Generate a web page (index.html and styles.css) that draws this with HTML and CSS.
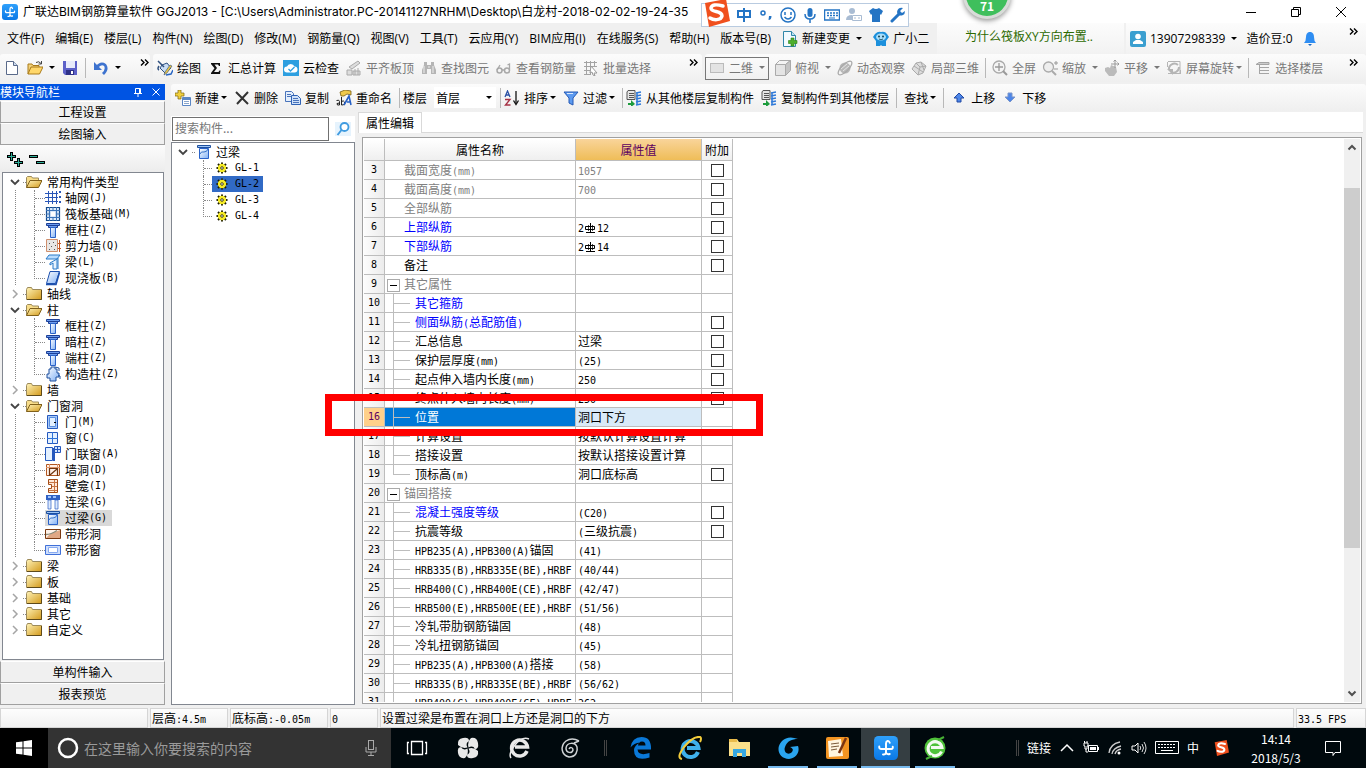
FILE: index.html
```html
<!DOCTYPE html>
<html lang="zh-CN">
<head>
<meta charset="utf-8">
<title>广联达BIM钢筋算量软件 GGJ2013</title>
<link rel="stylesheet" href="styles.css">
</head>
<body>
<svg class="defs" aria-hidden="true">
<defs>
<linearGradient id="gBlue" x1="0" y1="0" x2="1" y2="1"><stop offset="0" stop-color="#fff"/><stop offset="1" stop-color="#7fb0f5"/></linearGradient>
<linearGradient id="gFold" x1="0" y1="0" x2="1" y2="1"><stop offset="0" stop-color="#fff3b8"/><stop offset="1" stop-color="#d39a1c"/></linearGradient>
<linearGradient id="gApp" x1="0" y1="0" x2="0" y2="1"><stop offset="0" stop-color="#2ea0fb"/><stop offset="1" stop-color="#0a78e6"/></linearGradient>
<symbol id="i-app" viewBox="0 0 16 16"><rect width="16" height="16" rx="3" fill="url(#gApp)"/><path d="M10.500 4.500Q10 3 9 3.300 8 3.600 8 5V10.500Q8 12.500 6 12.300M3.500 7Q3.300 8.700 5 8.700H11.500Q12.700 8.700 12.500 7.200M8 11Q8.500 12.500 10.500 12" fill="none" stroke="#fff" stroke-width="1.300" stroke-linecap="round"/></symbol>
<symbol id="i-doc" viewBox="0 0 16 16"><path d="M2.500 1.500h7l4 4v9h-11z" fill="#fff" stroke="#5a6a8a"/><path d="M9.500 1.500v4h4" fill="#cddcf0" stroke="#5a6a8a"/></symbol>
<symbol id="i-open" viewBox="0 0 16 16"><path d="M1 14V4h4l1 1.500h6V8" fill="#f3d27a" stroke="#a97a1a"/><path d="M1 14l3-7h12l-3.500 7z" fill="#ffd76a" stroke="#a97a1a"/><path d="M9 2.500q3-2 5 1M14.500 1v3h-3" fill="none" stroke="#444"/></symbol>
<symbol id="i-save" viewBox="0 0 16 16"><path d="M1 1h14v14H3l-2-2z" fill="#5c60c8"/><path d="M4 1h9v7H4z" fill="#e8ebfa"/><path d="M4 10h8v5H4z" fill="#2d3087"/><path d="M9 11h2v3H9z" fill="#fff"/></symbol>
<symbol id="i-undo" viewBox="0 0 16 16"><path d="M4 7q4-5 8-2 3 4-2 9" fill="none" stroke="#3e73cf" stroke-width="2.800"/><path d="M1 2v8h8z" fill="#3e73cf"/></symbol>
<symbol id="i-draw" viewBox="0 0 16 16"><path d="M5 5l5-2 4 5-6 5-5-5z" fill="#c9ddf5" stroke="#31517f"/><path d="M1 1l6 6M2 6q-2 3 0 4" fill="none" stroke="#31517f" stroke-width="1.500"/><path d="M15 6l-5 7-3 2 1-3 5-7z" fill="#e9c443" stroke="#31517f" stroke-width=".6"/><path d="M9 15l5-1 2-4" fill="none" stroke="#2a67c4" stroke-width="1.500"/></symbol>
<symbol id="i-sum" viewBox="0 0 16 16"><path d="M3 3h9v3h-1l-1-1.500H6.500L9 8l-3 4H10.500l1-1.500h1L12 14H3v-1l3.500-4.800L3 4z" fill="#111"/></symbol>
<symbol id="i-cloud" viewBox="0 0 16 16"><rect width="16" height="16" fill="#2d9fe0"/><path d="M4 12.500a3 3 0 010-6 4 4 0 017.500 0 3 3 0 010 6z" fill="#fff"/><path d="M5.500 9l2 2 4-4" fill="none" stroke="#2d9fe0" stroke-width="1.300"/></symbol>
<symbol id="i-level" viewBox="0 0 16 16"><path d="M3 7l9-6 2 2-8 6zM1 10h5v5H1zM7 11h7v4H7z" fill="#ddd" stroke="#aaa"/><path d="M9 9v6M12 8v7" stroke="#aaa"/></symbol>
<symbol id="i-binoc" viewBox="0 0 16 16"><path d="M3 2h3v3h4V2h3v3l2 5v4h-5V9H6v5H1v-4l2-5z" fill="#b5b5b5"/><path d="M3 6v7M12 6v7M8 6v2" stroke="#eee"/></symbol>
<symbol id="i-glasses" viewBox="0 0 16 16"><circle cx="3.500" cy="10.500" r="2.500" fill="none" stroke="#a8a8a8" stroke-width="1.500"/><circle cx="11" cy="10.500" r="2.500" fill="none" stroke="#a8a8a8" stroke-width="1.500"/><path d="M6 10h2.500M1 10l3-5M13.500 10V4l-2 1" fill="none" stroke="#a8a8a8" stroke-width="1.300"/></symbol>
<symbol id="i-batch" viewBox="0 0 16 16"><path d="M1 2.500h13M1 6.500h13M1 10.500h7M1 14.500h6M3.500 1v14M7.500 1v14M11.500 1v5" stroke="#a3a3a3"/><path d="M8 6l6 7h-3l1 3-2-1-1-3-2 1z" fill="#fff" stroke="#999"/></symbol>
<symbol id="i-rect" viewBox="0 0 16 16"><rect x="1.500" y="3.500" width="13" height="9" fill="#e3e3e3" stroke="#bbb"/></symbol>
<symbol id="i-cube" viewBox="0 0 16 16"><path d="M.5 4.500h10v11H.5z" fill="#e4e4e4" stroke="#aaa"/><path d="M.5 4.500l4-4h11l-5 4z" fill="#f4f4f4" stroke="#aaa"/><path d="M10.500 4.500l5-4v10l-5 5z" fill="#c4c4c4" stroke="#aaa"/></symbol>
<symbol id="i-orbit" viewBox="0 0 16 16"><circle cx="8" cy="8" r="5.500" fill="#b9b9b9"/><ellipse cx="8" cy="8" rx="9" ry="3.500" transform="rotate(-45 8 8)" fill="none" stroke="#aaa" stroke-width="1.300"/><path d="M4 9l6-5M6 11l6-5" stroke="#e4e4e4"/></symbol>
<symbol id="i-part" viewBox="0 0 16 16"><path d="M1 9l4-6 5-1 5 4-3 7-5 2z" fill="#ddd" stroke="#aaa"/><path d="M5 3l4 4-2 8M10 2l3 8M3 6l9 6M9 7l6-1" fill="none" stroke="#aaa"/></symbol>
<symbol id="i-full" viewBox="0 0 16 16"><circle cx="7" cy="7" r="6" fill="#f4f4f4" stroke="#aaa" stroke-width="1.300"/><path d="M7 3v8M3 7h8" stroke="#999" stroke-width="1.300"/><path d="M11 11l4 4" stroke="#999" stroke-width="2"/></symbol>
<symbol id="i-zoom" viewBox="0 0 16 16"><circle cx="6.500" cy="7" r="5" fill="#eee" stroke="#aaa" stroke-width="1.300"/><path d="M10 11l4 4" stroke="#aaa" stroke-width="2"/><path d="M12 3h4M14 1v4M12 9h4" stroke="#999"/></symbol>
<symbol id="i-pan" viewBox="0 0 16 16"><path d="M1 8l3-1 2 1 1-3 5 2 1 5-3 4H5L1 11z" fill="#bbb"/><path d="M11 0v8M7 4h8M9.500 1.500l1.500-1.500 1.500 1.500M13.500 2.500l1.500 1.500-1.500 1.500" fill="none" stroke="#999"/></symbol>
<symbol id="i-rot" viewBox="0 0 16 16"><path d="M2 1.500h12v12H2M1.500 2v5M14.500 10v4" fill="none" stroke="#b5b5b5"/><path d="M3 10a5.500 5.500 0 019-5M13 7a5.500 5.500 0 01-8 5" fill="none" stroke="#b5b5b5" stroke-width="2"/><path d="M1 9h6v6z" fill="#b5b5b5"/></symbol>
<symbol id="i-floor" viewBox="0 0 16 16"><path d="M1 4.500l3-2h10v2zM4 7.500h10M4 10.500h10M4 13.500h10M4.500 5v9" fill="#ccc" stroke="#a5a5a5"/></symbol>
<symbol id="i-new" viewBox="0 0 16 16"><path d="M3 0h3v3h3v3H6v3H3V6H0V3h3z" fill="#f0cf3e" stroke="#7c6510" stroke-width=".7"/><path d="M7.500 7.500h8v8h-8z" fill="#fff" stroke="#5a86c5"/><path d="M8 8h7v2H8z" fill="#5a86c5"/><path d="M9 11.500h5M9 13.500h5" stroke="#8aa6cc"/></symbol>
<symbol id="i-del" viewBox="0 0 16 16"><path d="M2 2l12 12M14 2L3 14" stroke="#333" stroke-width="2"/></symbol>
<symbol id="i-copy" viewBox="0 0 16 16"><path d="M.5 1.500h6l2 2v8h-8z" fill="#e3eefc" stroke="#4a74bb"/><path d="M6.500 5.500h6l3 3v6h-9z" fill="#cfe1f9" stroke="#2f62b5"/><path d="M2 4.500h4M2 6.500h4M8 8.500h5M8 10.500h6M8 12.500h6" stroke="#4a74bb"/></symbol>
<symbol id="i-rename" viewBox="0 0 16 16"><path d="M4 2l5-2 6 1v4l-4-1-3 2H5z" fill="#efc94c" stroke="#795d12" stroke-width=".8"/><path d="M.5 10.500q3-1 3 1v3.500H1.500q-2-2 2-2M5.500 7v8q4 0 3-3-1-2-3-.5" fill="none" stroke="#222"/><path d="M8 15l5-9 2 9M11 12h4" fill="none" stroke="#2761c6" stroke-width="1.600"/></symbol>
<symbol id="i-sort" viewBox="0 0 16 16"><path d="M1 7l2.500-6L6 7M2 5h3" fill="none" stroke="#2b51a5" stroke-width="1.300"/><path d="M1 9.500h5L1.500 15H6.500" fill="none" stroke="#a63245" stroke-width="1.400"/><path d="M12 1v13" stroke="#111" stroke-width="1.300"/><path d="M9.500 10.500l2.500 4 2.500-4" fill="none" stroke="#111" stroke-width="1.300"/></symbol>
<symbol id="i-filter" viewBox="0 0 16 16"><path d="M1 2h14L10 8v7l-4-2V8z" fill="#5c9af0" stroke="#2458b4"/><path d="M4 3.500h6" stroke="#d9e9ff"/></symbol>
<symbol id="i-from" viewBox="0 0 16 16"><path d="M2 .5h7v9H1V2z" fill="#e6e6e6" stroke="#555"/><path d="M3 3.500h5M3 5.500h5M3 7.500h5" stroke="#555"/><path d="M10 3l5-1M10 6l5-1M10 9l5-1M10 12l5-1M10 15l5-1M11 3v12" stroke="#2f79d8" stroke-width="1.500"/><path d="M2 13h3v-3l4 4-4 3v-2H2z" fill="#1c9b3c"/></symbol>
<symbol id="i-up" viewBox="0 0 16 16"><path d="M8 3l5 5h-3v4H6V8H3z" fill="#4d86e8" stroke="#2149a3"/></symbol>
<symbol id="i-down" viewBox="0 0 16 16"><path d="M8 12L3 7h3V3h4v4h3z" fill="#4d86e8" stroke="#7a95c9"/></symbol>
<symbol id="i-change" viewBox="0 0 16 16"><path d="M1.500.5h8l4 4v11h-12z" fill="#f2fafe" stroke="#2f86a8"/><path d="M9.500.5v4h4" fill="#bfe4f2" stroke="#2f86a8"/><path d="M9 7h3v2.500h3v3h-3V15H9v-2.500H6.500v-3H9z" fill="#4cae2c" stroke="#2c7f14" stroke-width=".6"/></symbol>
<symbol id="i-bot" viewBox="0 0 16 16"><path d="M2 3q3-3 6-2 4-1 6 2l2 3-3 4v5H9l-1-1-1 1H3v-5L0 6z" fill="#1c90dc"/><ellipse cx="8" cy="6" rx="5" ry="3.500" fill="#a9defa"/><circle cx="6" cy="5.500" r="1" fill="#145"/><circle cx="10" cy="5.500" r="1" fill="#145"/><path d="M6 8q2 1.500 4 0" fill="none" stroke="#145" stroke-width=".8"/></symbol>
<symbol id="i-user" viewBox="0 0 16 16"><rect width="16" height="16" rx="2" fill="#3b9fd0"/><circle cx="8" cy="5.500" r="2.800" fill="#fff"/><path d="M3 13v-2l3-2h4l3 2v2z" fill="#fff"/></symbol>
<symbol id="i-bell" viewBox="0 0 16 16"><path d="M2 12q2-2 2-6 0-4 3-5h2q3 1 3 5 0 4 2 6z" fill="#2e8df2"/><path d="M6 13h4l-2 2z" fill="#1968c4"/></symbol>
<symbol id="i-folder" viewBox="0 0 16 16"><path d="M.5 3.500l1-2h4l1 2h9v10H.5z" fill="url(#gFold)" stroke="#9c8a5a"/><path d="M15.500 4v9.500H1" fill="none" stroke="#5e4a1a"/></symbol>
<symbol id="i-folderopen" viewBox="0 0 16 16"><path d="M.5 13.500v-10l1-1h4l1 1.500h6V7" fill="#f8dd8a" stroke="#9c8a5a"/><path d="M.5 13.500L4 6.500h12l-3.500 7z" fill="url(#gFold)" stroke="#80601a"/></symbol>
<symbol id="t-grid" viewBox="0 0 16 16"><path d="M0 3.500h13M0 7.500h13M0 11.500h13M3.500 1v13M7.500 1v13M11.500 1v13" stroke="#2a57b8"/><path d="M14 1h2v2h-2zM14 6h2v2h-2zM14 11h2v2h-2z" fill="#2a57b8"/></symbol>
<symbol id="t-raft" viewBox="0 0 16 16"><path d="M1.500 1.500h13v13h-13zM4.500 4.500h7v7h-7z" fill="#dcebfc" stroke="#154a8c" stroke-width="1.200"/><path d="M1 4.500h14M1 11.500h14M4.500 1v14M11.500 1v14M8 1v3M8 12v3M1 8h3M12 8h3" stroke="#3b74b8"/><path d="M6 6h4v4H6z" fill="#fff"/></symbol>
<symbol id="t-col" viewBox="0 0 16 16"><path d="M1.500 1.500h13v2h-13zM3.500 3.500h9v2h-9z" fill="#6b9cef" stroke="#1c3f96"/><path d="M5.500 5.500h5v10h-5z" fill="url(#gBlue)" stroke="#2a62c8"/></symbol>
<symbol id="t-wall" viewBox="0 0 16 16"><path d="M1.500 1.500h11v12h-11z" fill="#e8e6e4" stroke="#cf8f6c"/><path d="M4 5.500h1M8 4.500h1M6 8.500h1M10 7.500h1M4 11.500h1M9 11.500h1" stroke="#555"/><path d="M14.500 2v12M13 5.500h3M13 10.500h3" stroke="#c65a28"/></symbol>
<symbol id="t-beam" viewBox="0 0 16 16"><path d="M1 5l3-4h11l-3 4z" fill="#b8dcff" stroke="#2a7ac8"/><path d="M5 9l7-4v10H8V9l-3 2zM13 4v11" fill="#e6f3ff" stroke="#2a7ac8"/></symbol>
<symbol id="t-slab" viewBox="0 0 16 16"><path d="M5 1.500h9.500l-4 12H1.500z" fill="url(#gBlue)" stroke="#1d50ae"/><path d="M1 14.500h10l3.500-12" fill="none" stroke="#1d50ae" stroke-width="1.500"/></symbol>
<symbol id="t-gzz" viewBox="0 0 16 16"><path d="M4 3h2V1h4v2h2v4h2v4h-3v4H5v-3H2V8h2z" fill="url(#gBlue)" stroke="#1d4f9c"/><path d="M10 1l4 1v3M13 9l2 1v3" fill="none" stroke="#1d4f9c"/></symbol>
<symbol id="t-door" viewBox="0 0 16 16"><path d="M2.500 1.500h10v13h-10z" fill="#a8caf8" stroke="#2558bd"/><path d="M4.500 3.500h6v9h-6z" fill="#e3f0ff" stroke="#5a8ee0"/><path d="M9 8.500h2" stroke="#000"/></symbol>
<symbol id="t-win" viewBox="0 0 16 16"><path d="M2.500 2.500h10v11h-10z" fill="#e3f0ff" stroke="#2558bd"/><path d="M7.500 2v12M2 8.500h11" stroke="#2d72d8"/></symbol>
<symbol id="t-dwin" viewBox="0 0 16 16"><path d="M.5 1.500h7v13h-7z" fill="#e3f0ff" stroke="#2558bd"/><path d="M9.500.5h6v6h-6zM12.500 1v6M9 3.500h6" fill="#cfe2fb" stroke="#2558bd"/><path d="M9 2v13" stroke="#2558bd" stroke-width="2"/></symbol>
<symbol id="t-hole" viewBox="0 0 16 16"><path d="M1.500 2.500h13v11h-13z" fill="#fff1e8" stroke="#b2561f"/><path d="M1 5.500h14M4.500 2v12M12.500 2v3" stroke="#e0956a"/><path d="M4.500 14V6.500h8V14M5 13l7-6" fill="none" stroke="#6e3510" stroke-width="1.200"/></symbol>
<symbol id="t-niche" viewBox="0 0 16 16"><path d="M3.500 1.500h9v13h-9v-4h3v-4h-3z" fill="#ffe9d8" stroke="#a54c16"/><path d="M9.500 2v12M4 4.500h8M7 8.500h5M4 12.500h8" stroke="#c77444"/></symbol>
<symbol id="t-ll" viewBox="0 0 16 16"><path d="M1 1h14v5H1z" fill="#2f60c4"/><path d="M3 2h3v2H3zM8 2h3v2H8z" fill="#9ec3fa"/><path d="M3 6h3v9H3zM10 6h3v9h-3z" fill="#dceafe" stroke="#2f60c4" stroke-width=".7"/></symbol>
<symbol id="t-gl" viewBox="0 0 16 16"><path d="M1.500 1.500h13v2h-13z" fill="#9cc4f8" stroke="#1d4f9c"/><path d="M3.500 4.500h9v10h-9z" fill="url(#gBlue)" stroke="#2a62c8"/><path d="M4 10q1-3 4-2 3 0 4-3" fill="none" stroke="#3472c9"/></symbol>
<symbol id="t-sh" viewBox="0 0 16 16"><path d="M.5 3.500h15v9H.5z" fill="#fff3ea" stroke="#7a3a12"/><path d="M1 12l4-4 10-4v8z" fill="#e0a885"/><path d="M1 8.500q5 0 11-4" fill="none" stroke="#8b8b7a" stroke-width="1.500"/></symbol>
<symbol id="t-sw" viewBox="0 0 16 16"><path d="M.5 3.500h15v9H.5z" fill="#cfdffc" stroke="#4070d8"/><path d="M3.500 5.500h9v5h-9z" fill="#fff" stroke="#88aaf0"/></symbol>
<symbol id="t-gear" viewBox="0 0 16 16"><path d="M8 2.500v11M2.500 8h11M4 4l8 8M12 4l-8 8" stroke="#1c1c00" stroke-width="2"/><circle cx="8" cy="8" r="4.200" fill="#f5ea24"/><circle cx="8" cy="8" r="1.300" fill="#fff" stroke="#1c1c00" stroke-width=".8"/></symbol>
<symbol id="i-caret" viewBox="0 0 6 4"><path d="M0 0h6L3 3z" fill="currentColor"/></symbol>
<symbol id="i-more" viewBox="0 0 9 7"><path d="M1 0.500l3 3-3 3M5 0.500l3 3-3 3" fill="none" stroke="#000" stroke-width="1.400"/></symbol>
<symbol id="c-open" viewBox="0 0 10 10"><path d="M1 3l4 4 4-4" fill="none" stroke="#444" stroke-width="1.800"/></symbol>
<symbol id="c-shut" viewBox="0 0 10 10"><path d="M3 1l4 4-4 4" fill="none" stroke="#a5a5a5" stroke-width="1.500"/></symbol>
<symbol id="i-rebar" viewBox="0 0 10 10"><path d="M5.500 0v10M1 9.500h9M.5 3.500h9v3h-9z" fill="none" stroke="#000"/><path d="M3.500 2v6M7.500 2v6" stroke="#000" stroke-width=".7"/></symbol>
<symbol id="i-sogou" viewBox="0 0 28 28"><path d="M3 4L24 0l4 22-21 6z" fill="#f0501e"/><path d="M21 7q-11-3-12 2c0 5 11 2 11 8-1 5-9 4-12 2" fill="none" stroke="#fff" stroke-width="3.500" stroke-linecap="round"/></symbol>
</defs>
</svg>

<header class="titlebar">
  <svg class="ico"><use href="#i-app"/></svg>
  <h1>广联达BIM钢筋算量软件 GGJ2013 - [C:\Users\Administrator.PC-20141127NRHM\Desktop\白龙村-2018-02-02-19-24-35</h1>
  <div class="winbtns">
    <button aria-label="最小化"><svg viewBox="0 0 12 12"><path d="M1 6.500h10" stroke="#000"/></svg></button>
    <button aria-label="还原"><svg viewBox="0 0 12 12"><path d="M1.500 3.500h7v7h-7zM3.500 3.500v-2h7v7h-2" fill="none" stroke="#000"/></svg></button>
    <button aria-label="关闭"><svg viewBox="0 0 12 12"><path d="M1 1l10 10M11 1L1 11" stroke="#000"/></svg></button>
  </div>
</header>

<div class="menubar">
  <nav class="menus">
    <button>文件(F)</button><button>编辑(E)</button><button>楼层(L)</button><button>构件(N)</button><button>绘图(D)</button><button>修改(M)</button><button>钢筋量(Q)</button><button>视图(V)</button><button>工具(T)</button><button>云应用(Y)</button><button>BIM应用(I)</button><button>在线服务(S)</button><button>帮助(H)</button><button>版本号(B)</button>
    <button><svg class="ico"><use href="#i-change"/></svg>新建变更<svg class="caret wide"><use href="#i-caret"/></svg></button>
    <button><svg class="ico"><use href="#i-bot"/></svg>广小二</button>
  </nav>
  <a class="tip" href="#">为什么筏板XY方向布置..</a>
  <div class="account">
    <button><svg class="ico"><use href="#i-user"/></svg>13907298339<svg class="caret wide"><use href="#i-caret"/></svg></button>
    <span>造价豆:0</span>
    <button aria-label="消息"><svg class="ico"><use href="#i-bell"/></svg></button>
    <button class="more" aria-label="更多"><svg><use href="#i-more"/></svg></button>
  </div>
</div>

<div class="toolrow">
  <div class="bar files">
    <button aria-label="新建工程"><svg class="ico"><use href="#i-doc"/></svg></button>
    <button aria-label="打开"><svg class="ico"><use href="#i-open"/></svg><svg class="caret"><use href="#i-caret"/></svg></button>
    <button aria-label="保存"><svg class="ico"><use href="#i-save"/></svg></button>
    <span class="sep"></span>
    <button aria-label="撤销"><svg class="ico"><use href="#i-undo"/></svg><svg class="caret wide"><use href="#i-caret"/></svg></button>
    <button class="more" aria-label="更多"><svg><use href="#i-more"/></svg></button>
  </div>
  <div class="bar edit">
    <button><svg class="ico"><use href="#i-draw"/></svg>绘图</button>
    <button><svg class="ico"><use href="#i-sum"/></svg>汇总计算</button>
    <button><svg class="ico"><use href="#i-cloud"/></svg>云检查</button>
    <button class="off"><svg class="ico"><use href="#i-level"/></svg>平齐板顶</button>
    <button class="off"><svg class="ico"><use href="#i-binoc"/></svg>查找图元</button>
    <button class="off"><svg class="ico"><use href="#i-glasses"/></svg>查看钢筋量</button>
    <button class="off"><svg class="ico"><use href="#i-batch"/></svg>批量选择</button>
    <button class="more" aria-label="更多"><svg><use href="#i-more"/></svg></button>
  </div>
  <div class="bar view">
    <button class="off dim"><svg class="ico"><use href="#i-rect"/></svg>二维<svg class="caret wide"><use href="#i-caret"/></svg></button>
    <button class="off"><svg class="ico"><use href="#i-cube"/></svg>俯视<svg class="caret wide"><use href="#i-caret"/></svg></button>
    <button class="off"><svg class="ico"><use href="#i-orbit"/></svg>动态观察</button>
    <button class="off"><svg class="ico"><use href="#i-part"/></svg>局部三维</button>
    <span class="sep"></span>
    <button class="off"><svg class="ico"><use href="#i-full"/></svg>全屏</button>
    <button class="off"><svg class="ico"><use href="#i-zoom"/></svg>缩放<svg class="caret wide"><use href="#i-caret"/></svg></button>
    <button class="off"><svg class="ico"><use href="#i-pan"/></svg>平移<svg class="caret wide"><use href="#i-caret"/></svg></button>
    <button class="off"><svg class="ico"><use href="#i-rot"/></svg>屏幕旋转<svg class="caret"><use href="#i-caret"/></svg></button>
    <span class="sep"></span>
    <button class="off"><svg class="ico"><use href="#i-floor"/></svg>选择楼层</button>
    <button class="more" aria-label="更多"><svg><use href="#i-more"/></svg></button>
  </div>
</div>

<main class="work">
  <aside class="nav">
    <div class="navhead"><h2>模块导航栏</h2>
      <button aria-label="固定"><svg viewBox="0 0 10 10"><path d="M2.500 6V1.500h5V6M1 6.500h8M5 6.500V10M6.500 1.500V6" fill="none" stroke="#fff"/></svg></button>
      <button aria-label="关闭导航栏"><svg viewBox="0 0 10 10"><path d="M1.500 1.500l7 7M8.500 1.500l-7 7" stroke="#fff"/></svg></button>
    </div>
    <button class="section">工程设置</button>
    <button class="section">绘图输入</button>
    <div class="navtools">
      <button aria-label="全部展开"><svg viewBox="0 0 17 16"><path d="M5.500 1v9M1 5.500h9M12.500 7v9M8 11.500h9" stroke="#000" stroke-width="3"/><path d="M5.500 2v7M2 5.500h7M12.500 8v7M9 11.500h7" stroke="#2fae98"/></svg></button>
      <button aria-label="全部折叠"><svg viewBox="0 0 17 16"><path d="M1 5.500h9M8 11.500h9" stroke="#000" stroke-width="3"/><path d="M2 5.500h7M9 11.500h7" stroke="#2fae98"/></svg></button>
    </div>
    <ul class="tree">
      <li><div class="row"><svg class="chev"><use href="#c-open"/></svg><svg class="ico"><use href="#i-folderopen"/></svg>常用构件类型</div>
        <ul>
          <li><a href="#"><svg class="ico"><use href="#t-grid"/></svg>轴网<span class="m">(J)</span></a></li>
          <li><a href="#"><svg class="ico"><use href="#t-raft"/></svg>筏板基础<span class="m">(M)</span></a></li>
          <li><a href="#"><svg class="ico"><use href="#t-col"/></svg>框柱<span class="m">(Z)</span></a></li>
          <li><a href="#"><svg class="ico"><use href="#t-wall"/></svg>剪力墙<span class="m">(Q)</span></a></li>
          <li><a href="#"><svg class="ico"><use href="#t-beam"/></svg>梁<span class="m">(L)</span></a></li>
          <li><a href="#"><svg class="ico"><use href="#t-slab"/></svg>现浇板<span class="m">(B)</span></a></li>
        </ul></li>
      <li><div class="row"><svg class="chev"><use href="#c-shut"/></svg><svg class="ico"><use href="#i-folder"/></svg>轴线</div></li>
      <li><div class="row"><svg class="chev"><use href="#c-open"/></svg><svg class="ico"><use href="#i-folderopen"/></svg>柱</div>
        <ul>
          <li><a href="#"><svg class="ico"><use href="#t-col"/></svg>框柱<span class="m">(Z)</span></a></li>
          <li><a href="#"><svg class="ico"><use href="#t-col"/></svg>暗柱<span class="m">(Z)</span></a></li>
          <li><a href="#"><svg class="ico"><use href="#t-col"/></svg>端柱<span class="m">(Z)</span></a></li>
          <li><a href="#"><svg class="ico"><use href="#t-gzz"/></svg>构造柱<span class="m">(Z)</span></a></li>
        </ul></li>
      <li><div class="row"><svg class="chev"><use href="#c-shut"/></svg><svg class="ico"><use href="#i-folder"/></svg>墙</div></li>
      <li><div class="row"><svg class="chev"><use href="#c-open"/></svg><svg class="ico"><use href="#i-folderopen"/></svg>门窗洞</div>
        <ul>
          <li><a href="#"><svg class="ico"><use href="#t-door"/></svg>门<span class="m">(M)</span></a></li>
          <li><a href="#"><svg class="ico"><use href="#t-win"/></svg>窗<span class="m">(C)</span></a></li>
          <li><a href="#"><svg class="ico"><use href="#t-dwin"/></svg>门联窗<span class="m">(A)</span></a></li>
          <li><a href="#"><svg class="ico"><use href="#t-hole"/></svg>墙洞<span class="m">(D)</span></a></li>
          <li><a href="#"><svg class="ico"><use href="#t-niche"/></svg>壁龛<span class="m">(I)</span></a></li>
          <li><a href="#"><svg class="ico"><use href="#t-ll"/></svg>连梁<span class="m">(G)</span></a></li>
          <li><a href="#" class="cur"><svg class="ico"><use href="#t-gl"/></svg>过梁<span class="m">(G)</span></a></li>
          <li><a href="#"><svg class="ico"><use href="#t-sh"/></svg>带形洞</a></li>
          <li><a href="#"><svg class="ico"><use href="#t-sw"/></svg>带形窗</a></li>
        </ul></li>
      <li><div class="row"><svg class="chev"><use href="#c-shut"/></svg><svg class="ico"><use href="#i-folder"/></svg>梁</div></li>
      <li><div class="row"><svg class="chev"><use href="#c-shut"/></svg><svg class="ico"><use href="#i-folder"/></svg>板</div></li>
      <li><div class="row"><svg class="chev"><use href="#c-shut"/></svg><svg class="ico"><use href="#i-folder"/></svg>基础</div></li>
      <li><div class="row"><svg class="chev"><use href="#c-shut"/></svg><svg class="ico"><use href="#i-folder"/></svg>其它</div></li>
      <li><div class="row"><svg class="chev"><use href="#c-shut"/></svg><svg class="ico"><use href="#i-folder"/></svg>自定义</div></li>
    </ul>
    <button class="section">单构件输入</button>
    <button class="section">报表预览</button>
  </aside>

  <section class="content">
    <div class="bar manage">
      <button><svg class="ico"><use href="#i-new"/></svg>新建<svg class="caret"><use href="#i-caret"/></svg></button>
      <button><svg class="ico"><use href="#i-del"/></svg>删除</button>
      <button><svg class="ico"><use href="#i-copy"/></svg>复制</button>
      <button><svg class="ico"><use href="#i-rename"/></svg>重命名</button>
      <span class="sep tight"></span>
      <label for="floor">楼层</label>
      <span class="pick"><select id="floor"><option>首层</option></select><svg class="caret"><use href="#i-caret"/></svg></span>
      <span class="sep tight"></span>
      <button><svg class="ico"><use href="#i-sort"/></svg>排序<svg class="caret"><use href="#i-caret"/></svg></button>
      <button><svg class="ico"><use href="#i-filter"/></svg>过滤<svg class="caret"><use href="#i-caret"/></svg></button>
      <span class="sep tight"></span>
      <button><svg class="ico"><use href="#i-from"/></svg>从其他楼层复制构件</button>
      <button><svg class="ico"><use href="#i-from"/></svg>复制构件到其他楼层</button>
      <span class="sep"></span>
      <button>查找<svg class="caret"><use href="#i-caret"/></svg></button>
      <span class="sep"></span>
      <button><svg class="ico"><use href="#i-up"/></svg>上移</button>
      <button><svg class="ico"><use href="#i-down"/></svg>下移</button>
    </div>
    <div class="panes">
      <div class="parts">
        <div class="find"><input type="text" aria-label="搜索构件" placeholder="搜索构件...">
          <button aria-label="搜索"><svg class="ico" viewBox="0 0 16 16"><path d="M0 1h16v14H0z" fill="#e6f3fd"/><circle cx="9.500" cy="6" r="4" fill="#fff" stroke="#3f9be0" stroke-width="1.800"/><path d="M6.500 9l-4 5" stroke="#3f9be0" stroke-width="2"/></svg></button></div>
        <ul class="tree list">
          <li><div class="row"><svg class="chev"><use href="#c-open"/></svg><svg class="ico"><use href="#t-gl"/></svg>过梁</div>
            <ul>
              <li><a href="#"><svg class="ico"><use href="#t-gear"/></svg><span class="m">GL-1</span></a></li>
              <li><a href="#" class="sel"><svg class="ico"><use href="#t-gear"/></svg><span class="m">GL-2</span></a></li>
              <li><a href="#"><svg class="ico"><use href="#t-gear"/></svg><span class="m">GL-3</span></a></li>
              <li><a href="#"><svg class="ico"><use href="#t-gear"/></svg><span class="m">GL-4</span></a></li>
            </ul></li>
        </ul>
      </div>
      <div class="props">
        <div class="tabs"><button class="tab">属性编辑</button></div>
        <div class="frame">
          <div class="sheet">
          <table>
            <colgroup><col class="c1"><col class="c2"><col class="c3"><col class="c4"></colgroup>
            <thead><tr><th></th><th>属性名称</th><th class="hot">属性值</th><th>附加</th></tr></thead>
            <tbody>
              <tr class="gray"><th>3</th><td class="top">截面宽度<span class="m">(mm)</span></td><td><span class="m">1057</span></td><td><input type="checkbox" aria-label="附加 3"></td></tr>
              <tr class="gray"><th>4</th><td class="top">截面高度<span class="m">(mm)</span></td><td><span class="m">700</span></td><td><input type="checkbox" aria-label="附加 4"></td></tr>
              <tr class="gray"><th>5</th><td class="top">全部纵筋</td><td></td><td><input type="checkbox" aria-label="附加 5"></td></tr>
              <tr><th>6</th><td class="top blue">上部纵筋</td><td><span class="m">2</span><svg class="rebar"><use href="#i-rebar"/></svg><span class="m">12</span></td><td><input type="checkbox" aria-label="附加 6"></td></tr>
              <tr><th>7</th><td class="top blue">下部纵筋</td><td><span class="m">2</span><svg class="rebar"><use href="#i-rebar"/></svg><span class="m">14</span></td><td><input type="checkbox" aria-label="附加 7"></td></tr>
              <tr><th>8</th><td class="top">备注</td><td></td><td><input type="checkbox" aria-label="附加 8"></td></tr>
              <tr class="gray"><th>9</th><td class="group"><button aria-label="折叠其它属性"></button>其它属性</td><td></td><td></td></tr>
              <tr><th>10</th><td class="sub blue">其它箍筋</td><td></td><td></td></tr>
              <tr><th>11</th><td class="sub blue">侧面纵筋<span class="m">(</span>总配筋值<span class="m">)</span></td><td></td><td><input type="checkbox" aria-label="附加 11"></td></tr>
              <tr><th>12</th><td class="sub">汇总信息</td><td>过梁</td><td><input type="checkbox" aria-label="附加 12"></td></tr>
              <tr><th>13</th><td class="sub">保护层厚度<span class="m">(mm)</span></td><td><span class="m">(25)</span></td><td><input type="checkbox" aria-label="附加 13"></td></tr>
              <tr><th>14</th><td class="sub">起点伸入墙内长度<span class="m">(mm)</span></td><td><span class="m">250</span></td><td><input type="checkbox" aria-label="附加 14"></td></tr>
              <tr><th>15</th><td class="sub">终点伸入墙内长度<span class="m">(mm)</span></td><td><span class="m">250</span></td><td><input type="checkbox" aria-label="附加 15"></td></tr>
              <tr class="active"><th>16</th><td class="sub">位置</td><td>洞口下方</td><td></td></tr>
              <tr><th>17</th><td class="sub">计算设置</td><td>按默认计算设置计算</td><td></td></tr>
              <tr><th>18</th><td class="sub">搭接设置</td><td>按默认搭接设置计算</td><td></td></tr>
              <tr><th>19</th><td class="sub end">顶标高<span class="m">(m)</span></td><td>洞口底标高</td><td><input type="checkbox" aria-label="附加 19"></td></tr>
              <tr class="gray"><th>20</th><td class="group"><button aria-label="折叠锚固搭接"></button>锚固搭接</td><td></td><td></td></tr>
              <tr><th>21</th><td class="sub blue">混凝土强度等级</td><td><span class="m">(C20)</span></td><td><input type="checkbox" aria-label="附加 21"></td></tr>
              <tr><th>22</th><td class="sub">抗震等级</td><td><span class="m">(</span>三级抗震<span class="m">)</span></td><td><input type="checkbox" aria-label="附加 22"></td></tr>
              <tr><th>23</th><td class="sub"><span class="m">HPB235(A),HPB300(A)</span>锚固</td><td><span class="m">(41)</span></td><td></td></tr>
              <tr><th>24</th><td class="sub"><span class="m">HRB335(B),HRB335E(BE),HRBF</span></td><td><span class="m">(40/44)</span></td><td></td></tr>
              <tr><th>25</th><td class="sub"><span class="m">HRB400(C),HRB400E(CE),HRBF</span></td><td><span class="m">(42/47)</span></td><td></td></tr>
              <tr><th>26</th><td class="sub"><span class="m">HRB500(E),HRB500E(EE),HRBF</span></td><td><span class="m">(51/56)</span></td><td></td></tr>
              <tr><th>27</th><td class="sub">冷轧带肋钢筋锚固</td><td><span class="m">(48)</span></td><td></td></tr>
              <tr><th>28</th><td class="sub">冷轧扭钢筋锚固</td><td><span class="m">(45)</span></td><td></td></tr>
              <tr><th>29</th><td class="sub"><span class="m">HPB235(A),HPB300(A)</span>搭接</td><td><span class="m">(58)</span></td><td></td></tr>
              <tr><th>30</th><td class="sub"><span class="m">HRB335(B),HRB335E(BE),HRBF</span></td><td><span class="m">(56/62)</span></td><td></td></tr>
              <tr><th>31</th><td class="sub"><span class="m">HRB400(C),HRB400E(CE),HRBF</span></td><td><span class="m">262</span></td><td></td></tr>
            </tbody>
          </table>
          </div>
          <div class="scroll">
            <svg viewBox="0 0 10 10"><path d="M1.500 6.500L5 3l3.500 3.500" fill="none" stroke="#505050" stroke-width="2"/></svg>
            <span class="track"><span class="thumb"></span></span>
            <svg viewBox="0 0 10 10"><path d="M1.500 3.500L5 7l3.500-3.500" fill="none" stroke="#505050" stroke-width="2"/></svg>
          </div>
        </div>
      </div>
    </div>
  </section>
</main>

<footer class="status">
  <span class="s1"></span><span class="s2">层高<span class="m">:4.5m</span></span><span class="s3">底标高<span class="m">:-0.05m</span></span><span class="s4"><span class="m">0</span></span><span class="s5">设置过梁是布置在洞口上方还是洞口的下方</span><span class="s6"><span class="m">33.5 FPS</span></span>
</footer>

<div class="taskbar">
  <button class="start" aria-label="开始"><svg viewBox="0 0 16 16"><path d="M0 2.300L6.500 1.400V7.500H0zM7.500 1.200L16 0v7.500H7.500zM0 8.500h6.500v6.100L0 13.700zM7.500 8.500H16V16l-8.500-1.200z" fill="#fff"/></svg></button>
  <div class="search"><svg class="ring" viewBox="0 0 22 22"><circle cx="11" cy="11" r="9" fill="none" stroke="#fff" stroke-width="2.500"/></svg>
    <input type="text" aria-label="搜索" placeholder="在这里输入你要搜索的内容">
    <svg class="ico" viewBox="0 0 16 16"><rect x="5.500" y=".5" width="5" height="9" fill="none" stroke="#aaa"/><path d="M3 7v5h10V7M8 12v3M5 15.500h6" fill="none" stroke="#aaa"/></svg></div>
  <div class="apps first">
    <button aria-label="任务视图"><svg viewBox="0 0 24 24"><path d="M6.500 5.500h11v13h-11zM4 6.500H2.500v11H4M20 6.500h1.500v11H20" fill="none" stroke="#fff" stroke-width="1.300"/></svg></button>
    <button aria-label="应用"><svg viewBox="0 0 24 24"><path d="M11.500 11.500Q6 13 2 9q-1-6 5-7 6-1 6 3-4 2-1.500 6.500zM12.500 11.500Q11 6 15 2q6-1 7 5 1 6-3 6-2-4-6.500-1.500zM12.500 12.500Q18 11 22 15q1 6-5 7-6 1-6-3 4-2 1.500-6.500zM11.500 12.500Q13 18 9 22q-6 1-7-5-1-6 3-6 2 4 6.500 1.500z" fill="#e9e9e9"/></svg></button>
    <button aria-label="浏览器"><svg viewBox="0 0 24 24"><path d="M20 15a8 8 0 11.500-4H8" fill="none" stroke="#e9e9e9" stroke-width="3.500"/><path d="M4 22Q1 18 8 9t14-6" fill="none" stroke="#e9e9e9" stroke-width="1.500"/></svg></button>
    <button aria-label="漩涡"><svg viewBox="0 0 24 24"><path d="M21 5q-7-4-13 0c-6 5-5 14 3 16 7 0 9-6 8-10-2-5-10-5-11 1 0 5 6 6 7 2 0-3-3-3-4-1M21 5l-5 2" fill="none" stroke="#cfd3d5" stroke-width="1.500"/></svg></button>
  </div>
  <span class="grip"></span>
  <div class="apps">
    <button aria-label="Edge"><svg viewBox="0 0 24 24"><path d="M22 13.500H8.500q1 7 12 3.500v4.500Q5 26 5 14q.5-5 6-7.500Q5 7 1.500 11.500 3 1 12.500 1 22.500 1 22 13.500zM9 9.500h7.500q0-4-3.500-4-3.500 0-4 4z" fill="#0a78d7"/></svg></button>
    <button aria-label="Internet Explorer"><svg viewBox="0 0 24 24"><path d="M20 16a8 8 0 11.500-4H9" fill="none" stroke="#3fb1ec" stroke-width="4"/><path d="M4 23Q-2 22 6 11 15 0 22 1q2 1 0 5" fill="none" stroke="#f3cd3b" stroke-width="2"/></svg></button>
    <button aria-label="文件资源管理器"><svg viewBox="0 0 24 24"><path d="M2 3h8l2 3h11v14H2z" fill="#fbe08a"/><path d="M2 3h8v3H2z" fill="#e9bb4a"/><path d="M6 21v-8h13v8h-4v-4h-5v4z" fill="#36a7e0"/></svg></button>
    <button class="run" aria-label="广联达"><svg viewBox="0 0 24 24"><path d="M22 3Q12-1 6 5C-1 12 3 23 13 23c8-1 11-8 9-13l-8 1c2 1 4 2 2 5-4 4-9 0-7-5 2-6 7-8 13-8z" fill="#2aa5ef"/></svg></button>
    <button class="run" aria-label="文档"><svg viewBox="0 0 24 24"><rect x="1" y="1" width="23" height="22" rx="2" fill="#f29422"/><path d="M3 5l13-2 2 17-14 1z" fill="#fff6e0"/><path d="M6 8l8-1M6 11l8-1M6 14l6-1" stroke="#7a5a3a"/><path d="M21 2l-7 15" stroke="#7a3412" stroke-width="2.500"/></svg></button>
    <button class="run on" aria-label="GGJ2013"><svg viewBox="0 0 16 16"><use href="#i-app"/></svg></button>
    <button class="run" aria-label="360浏览器"><svg viewBox="0 0 24 24"><circle cx="12" cy="12" r="10.500" fill="#4fc23a"/><path d="M18.500 15.500a7 7 0 11.500-4H8" fill="none" stroke="#f4fbf0" stroke-width="3"/><path d="M21 1l-6 3M3 23l6-3" stroke="#46b034" stroke-width="2"/></svg></button>
  </div>
  <div class="tray">
    <span class="grip"></span>
    <span class="link">链接</span>
    <svg viewBox="0 0 16 16"><path d="M2 11l6-6 6 6" fill="none" stroke="#fff" stroke-width="1.500"/></svg>
    <svg viewBox="0 0 16 16"><path d="M5.500 5.500h9v6h-9z" fill="none" stroke="#fff"/><path d="M7 7h6v3H7zM15 7h1v3h-1z" fill="#fff"/><path d="M1 3h4v3H4v3H2V6H1zM1.500 1v2M4 1v2M3 9v3h2" fill="none" stroke="#fff"/></svg>
    <svg viewBox="0 0 16 16"><path d="M2 13Q3 4 13 2M5 14q1-6 9-8M8 14q1-4 6-5" fill="none" stroke="#ccc" stroke-width="1.300"/><circle cx="12" cy="13" r="1.500" fill="#fff"/></svg>
    <svg viewBox="0 0 16 16"><path d="M1 6h3l3-3v10l-3-3H1z" fill="none" stroke="#fff"/><path d="M9 6q1.500 2 0 4M11 4q3 4 0 8M13 2q4 6 0 12" fill="none" stroke="#ddd"/></svg>
    <svg class="kbd" viewBox="0 0 24 16"><path d="M.5 1.500h23v12H.5z" fill="none" stroke="#fff"/><path d="M3 4.500h18M3 7.500h18" stroke="#fff" stroke-dasharray="2 1"/><path d="M6 10.500h12" stroke="#fff"/></svg>
    <span class="ime">中</span>
    <svg viewBox="0 0 28 28"><use href="#i-sogou"/></svg>
    <time>14:14<br>2018/5/3</time>
    <svg class="note" viewBox="0 0 16 16"><path d="M.5 1.500h15v11H10l-2 3v-3H.5z" fill="none" stroke="#fff"/></svg>
  </div>
</div>

<div class="mark"></div>
<div class="ball">71</div>
<div class="imebar">
  <svg class="logo"><use href="#i-sogou"/></svg>
  <svg viewBox="0 0 16 16"><path d="M2 4h12v6H2zM8 1v14" fill="none" stroke="#2474c4" stroke-width="2"/></svg>
  <svg viewBox="0 0 16 16"><circle cx="5" cy="6" r="2" fill="none" stroke="#2474c4" stroke-width="1.500"/><path d="M11 9h2.500q0 4-3 4" fill="#2474c4"/></svg>
  <svg viewBox="0 0 16 16"><circle cx="8" cy="8" r="7" fill="none" stroke="#2474c4" stroke-width="1.500"/><path d="M5 5v3M11 5v3M4.500 10q3.500 4 7 0" fill="none" stroke="#2474c4" stroke-width="1.500"/></svg>
  <svg viewBox="0 0 16 16"><rect x="5.500" y="1" width="5" height="9" rx="2.500" fill="#2474c4"/><path d="M3 7q0 5 5 5t5-5M8 12v4" fill="none" stroke="#2474c4" stroke-width="1.500"/></svg>
  <svg viewBox="0 0 16 16"><path d="M.5 3h15v10H.5z" fill="none" stroke="#2474c4" stroke-width="1.500"/><path d="M3 6h11M3 8.500h11" stroke="#2474c4" stroke-width="1.500" stroke-dasharray="2 1"/><path d="M5 11h6" stroke="#2474c4"/></svg>
  <svg viewBox="0 0 16 16"><circle cx="6" cy="4" r="3" fill="#a9bcd3"/><path d="M0 13q0-5 6-5l1 5z" fill="#a9bcd3"/><path d="M6.500 8.500h9v5h-9z" fill="#fff" stroke="#a9bcd3"/><path d="M8 11h2M12 11h2" stroke="#a9bcd3"/></svg>
  <svg viewBox="0 0 16 16"><path d="M1 4l4-3q3 2 6 0l4 3-2 4-1-1v8H4V7L3 8z" fill="#2474c4"/></svg>
  <svg viewBox="0 0 16 16"><path d="M2 14l7-7" stroke="#2474c4" stroke-width="3" stroke-linecap="round"/><path d="M13 1q-5-1-6 4 1 5 6 3 2-1 2-4l-3 2-2-2z" fill="#2474c4"/></svg>
</div>
</body>
</html>
```
FILE: styles.css
```css
*, *::before, *::after { box-sizing: border-box; }
body {
  margin: 0;
  height: 100vh;
  display: flex;
  flex-direction: column;
  overflow: hidden;
  position: relative;
  background: #f0f0f0;
  color: #000;
  font: 12px/16px "Noto Sans CJK SC", sans-serif;
}
.defs { position: absolute; width: 0; height: 0; }
button {
  display: flex;
  align-items: center;
  gap: 4px;
  margin: 0;
  padding: 0;
  border: 0;
  background: none;
  color: inherit;
  font: inherit;
  white-space: nowrap;
}
a { color: inherit; text-decoration: none; }
h1, h2 { margin: 0; font: inherit; }
ul { margin: 0; padding: 0; list-style: none; }
svg { flex: none; }
.ico { width: 16px; height: 16px; }
.caret { width: 6px; height: 4px; margin-left: -2px; }
.caret.wide { margin-left: 2px; }
.m { font-family: "DejaVu Sans Mono", monospace; font-size: 10px; line-height: 1; }
.off { color: #787878; }
.sep { width: 1px; height: 20px; background: #b8b8b8; }
.more { margin-left: auto; align-self: flex-start; padding-top: 5px; }
.more svg { width: 9px; height: 7px; }

.titlebar {
  display: flex;
  align-items: center;
  height: 23px;
  padding-left: 2px;
  gap: 5px;
  background: #fff;
}
.titlebar h1 {
  flex: 1;
  overflow: hidden;
  white-space: nowrap;
  font-family: Inter, "Noto Sans CJK SC", sans-serif;
}
.winbtns { display: flex; padding-right: 3px; }
.winbtns button { width: 45px; justify-content: center; }
.winbtns svg { width: 12px; height: 12px; }

.menubar { display: flex; height: 31px; font-family: "Open Sans", "Noto Sans CJK SC", sans-serif; }
.menus { display: flex; align-items: center; gap: 11px; padding-left: 7px; width: 937px; }
.tip {
  width: 187px;
  padding-left: 28px;
  line-height: 28px;
  color: #2c6a00;
  background: linear-gradient(#fcfcfc, #f2f2f2);
}
.account {
  flex: 1;
  display: flex;
  align-items: center;
  gap: 9px;
  margin-left: 2px;
  padding: 0 8px 0 4px;
  background: linear-gradient(#fcfcfc, #f2f2f2);
}

.toolrow { display: flex; gap: 3px; height: 30px; padding-bottom: 2px; }
.bar {
  display: flex;
  align-items: center;
  gap: 7px;
  padding: 0 4px;
  background: linear-gradient(#fcfcfc, #efefef);
  border-radius: 3px;
}
.files { width: 150px; padding-right: 1px; }
.files .caret { margin-left: 2px; }
.edit { width: 549px; }
.view { flex: 1; padding: 0 8px 0 0; gap: 6px; }
.dim { height: 23px; padding: 0 3px; border: 1px solid #777; }

.work { flex: 1; min-height: 0; display: flex; gap: 6px; }
.nav { width: 165px; display: flex; flex-direction: column; padding-bottom: 3px; }
.navhead {
  display: flex;
  align-items: center;
  gap: 8px;
  height: 16px;
  padding-right: 4px;
  margin-bottom: 1px;
  background: #0054e3;
  color: #fff;
}
.navhead h2 { flex: 1; }
.navhead svg { width: 10px; height: 10px; }
.section {
  justify-content: center;
  height: 22px;
  border: 1px solid #a0a0a0;
  border-top-color: #fff;
}
.navtools {
  display: flex;
  align-items: center;
  gap: 5px;
  height: 27px;
  padding-left: 6px;
  background: linear-gradient(#fcfcfc, #ececec);
}
.navtools svg { width: 17px; height: 16px; }

.tree {
  flex: 1;
  min-height: 0;
  margin: 0 1px 1px 2px;
  padding-top: 1px;
  border: 1px solid #828790;
  background: #fff;
}
.row {
  display: flex;
  align-items: center;
  height: 16px;
  padding-left: 7px;
  background: repeating-linear-gradient(90deg, #888 0 1px, #fff 1px 2px) 20px 8px / 3px 1px no-repeat;
}
.row .chev { width: 10px; height: 10px; }
.row .ico { margin: 0 5px 0 6px; }
.tree ul {
  padding-left: 31px;
  background: repeating-linear-gradient(#888 0 1px, #fff 1px 2px) 12px 0 / 1px 100% no-repeat;
}
.tree ul li { display: flex; height: 16px; border-left: 1px dotted #888; }
.tree ul li::before { content: ""; width: 10px; height: 9px; border-bottom: 1px dotted #888; }
.tree ul li:last-child { border-left: 0; }
.tree ul li:last-child::before { width: 11px; border-left: 1px dotted #888; }
.tree a { display: flex; align-items: center; padding-right: 5px; }
.tree a .ico { margin-right: 4px; }
.cur { background: #d9d9d9; }

.content { flex: 1; min-width: 0; display: flex; flex-direction: column; }
.manage { height: 27px; }
.manage .tight { margin-right: -4px; }
.pick {
  display: flex;
  align-items: center;
  width: 62px;
  height: 21px;
  margin-right: -3px;
  padding-right: 4px;
  background: #fff;
}
.pick select { flex: 1; appearance: none; border: 0; padding: 0 2px; background: none; font: inherit; }
.panes { flex: 1; min-height: 0; display: flex; gap: 3px; }
.parts { width: 184px; display: flex; flex-direction: column; padding: 5px 0 3px; }
.find { display: flex; gap: 6px; height: 26px; padding-left: 1px; background: #fff; align-items: center; }
.find input {
  width: 157px;
  height: 24px;
  padding: 0 2px 4px;
  border: 1px solid #707070;
  font: inherit;
}
.find input::placeholder { color: #777; }
.list { margin: 0; padding-top: 1px; }
.list ul { background: none; }
.list .row { padding-left: 6px; }
.list .row .ico { margin-left: 8px; margin-right: 4px; }
.list ul li::before { width: 8px; }
.list ul li:last-child::before { width: 9px; }
.list a { padding: 0 4px 0 2px; }
.list a .ico { margin-right: 5px; }
.sel { background: #316ac5; }

.props { flex: 1; min-width: 0; display: flex; flex-direction: column; padding: 1px 3px 4px 0; }
.tabs { display: flex; height: 21px; background: #fff; border-bottom: 1px solid #d9d9d9; }
.tab { height: 21px; padding: 0 7px; border: 1px solid #d9d9d9; border-bottom: 0; background: #fff; }
.frame {
  flex: 1;
  min-height: 0;
  display: flex;
  justify-content: space-between;
  padding: 1px;
  margin: 4px 1px 0 4px;
  border: 1px solid #a0a0a0;
  background: #fff;
}
.sheet { overflow: hidden; }
table { width: 369px; table-layout: fixed; border-collapse: separate; border-spacing: 0; }
.c1 { width: 21px; }
.c2 { width: 191px; }
.c3 { width: 126px; }
.c4 { width: 31px; }
td, th {
  height: 19px;
  padding: 0 2px;
  border: solid #bdbdbd;
  border-width: 0 1px 1px 0;
  line-height: 18px;
  font-weight: normal;
  text-align: left;
  white-space: nowrap;
  overflow: hidden;
}
th { padding: 0; text-align: center; background: linear-gradient(90deg, #fcfcfc, #ececec); }
tbody th { font-family: "DejaVu Sans Mono", monospace; font-size: 10px; }
thead th { height: 22px; background: linear-gradient(#fff, #efefef); }
thead .hot { color: #5c0060; background: linear-gradient(#f9d49a, #efbd58); }
td:last-child { padding: 0; text-align: center; }
.gray td { color: #808080; }
td.blue { color: #00f; }
.top { padding-left: 19px; }
.group { padding-left: 2px; }
.group button {
  display: inline-block;
  vertical-align: middle;
  width: 13px;
  height: 13px;
  margin-right: 4px;
  border: 1px solid #aaa;
  background: linear-gradient(#000, #000) center / 7px 1px no-repeat #fff;
}
.sub {
  padding-left: 30px;
  background:
    linear-gradient(#bdbdbd, #bdbdbd) 8px 0 / 1px 100% no-repeat,
    linear-gradient(#bdbdbd, #bdbdbd) 8px 9px / 17px 1px no-repeat;
}
.sub.end { background-size: 1px 10px, 17px 1px; }
.active th { background: #ffd08a; color: #5c0060; }
.active td:nth-child(2) { background-color: #0078d7; color: #fff; }
.active td:nth-child(3) { background-color: #d9eaf8; }
.rebar { width: 10px; height: 10px; margin: 0 2px 0 1px; vertical-align: -1px; }
td input {
  appearance: none;
  display: block;
  width: 13px;
  height: 13px;
  margin: 0 auto;
  border: 1px solid #333;
  background: #fff;
}
.scroll {
  width: 16px;
  display: flex;
  flex-direction: column;
  align-items: center;
  padding: 4px 0;
  background: #f0f0f0;
}
.scroll svg { width: 10px; height: 10px; }
.track { flex: 1; width: 100%; padding-top: 35px; }
.thumb { display: block; height: 72%; background: #cdcdcd; }

.status { display: flex; gap: 2px; height: 20px; }
.status > span {
  padding: 0 1px;
  border: 1px solid #d5d5d5;
  line-height: 18px;
  white-space: nowrap;
  background: linear-gradient(#fdfdfd, #f1f1f1);
}
.s1 { width: 148px; }
.s2 { width: 78px; }
.s3 { width: 98px; }
.s4 { width: 48px; }
.s5 { flex: 1; }
.s6 { width: 70px; }

.taskbar { display: flex; align-items: center; height: 40px; background: #00090d; color: #fff; }
.start { width: 48px; height: 40px; justify-content: center; background: #000; }
.start svg { width: 16px; height: 16px; }
.search {
  width: 343px;
  height: 40px;
  display: flex;
  align-items: center;
  gap: 5px;
  padding: 0 12px 0 9px;
  background: #333;
}
.ring { width: 22px; height: 22px; }
.search input { flex: 1; padding: 0; border: 0; background: none; color: #fff; font: inherit; font-size: 14px; }
.search input::placeholder { color: #9a9a9a; }
.apps { display: flex; }
.apps button { width: 49px; height: 40px; justify-content: center; }
.apps.first button { width: 51px; }
.apps svg { width: 24px; height: 24px; }
.apps .run { background: linear-gradient(#76b9ed, #76b9ed) bottom / 40px 2px no-repeat; }
.apps .on { background-size: 100% 2px; background-color: #353e42; }
.grip { width: 3px; height: 16px; margin: 0 9px; border: solid #444; border-width: 0 1px; }
.tray { display: flex; align-items: center; gap: 8px; margin-left: auto; padding-right: 25px; }
.tray .grip { margin: 0; }
.tray svg { width: 16px; height: 16px; }
.tray .kbd { width: 24px; }
.tray .ime { margin-right: 6px; }
.tray time { width: 72px; padding-left: 6px; text-align: center; line-height: 19px; }
.tray .note { margin-left: 8px; }

.mark {
  position: absolute;
  left: 325px;
  top: 394px;
  width: 438px;
  height: 42px;
  border: 7px solid #f00;
}
.imebar {
  position: absolute;
  left: 701px;
  top: 3px;
  display: flex;
  align-items: center;
  gap: 6px;
  height: 24px;
  padding-right: 2px;
  border: 1px solid #b9cbe0;
  background: #fff;
}
.imebar svg { width: 16px; height: 16px; }
.imebar .logo { width: 28px; height: 28px; margin-top: -4px; }
.ball {
  position: absolute;
  left: 963px;
  top: -29px;
  width: 48px;
  height: 48px;
  border: 3px solid #d8dcd8;
  border-radius: 50%;
  background: #3fbf5c;
  color: #fff;
  font-weight: bold;
  line-height: 64px;
  text-align: center;
  box-shadow: 0 2px 5px #999;
}
```
